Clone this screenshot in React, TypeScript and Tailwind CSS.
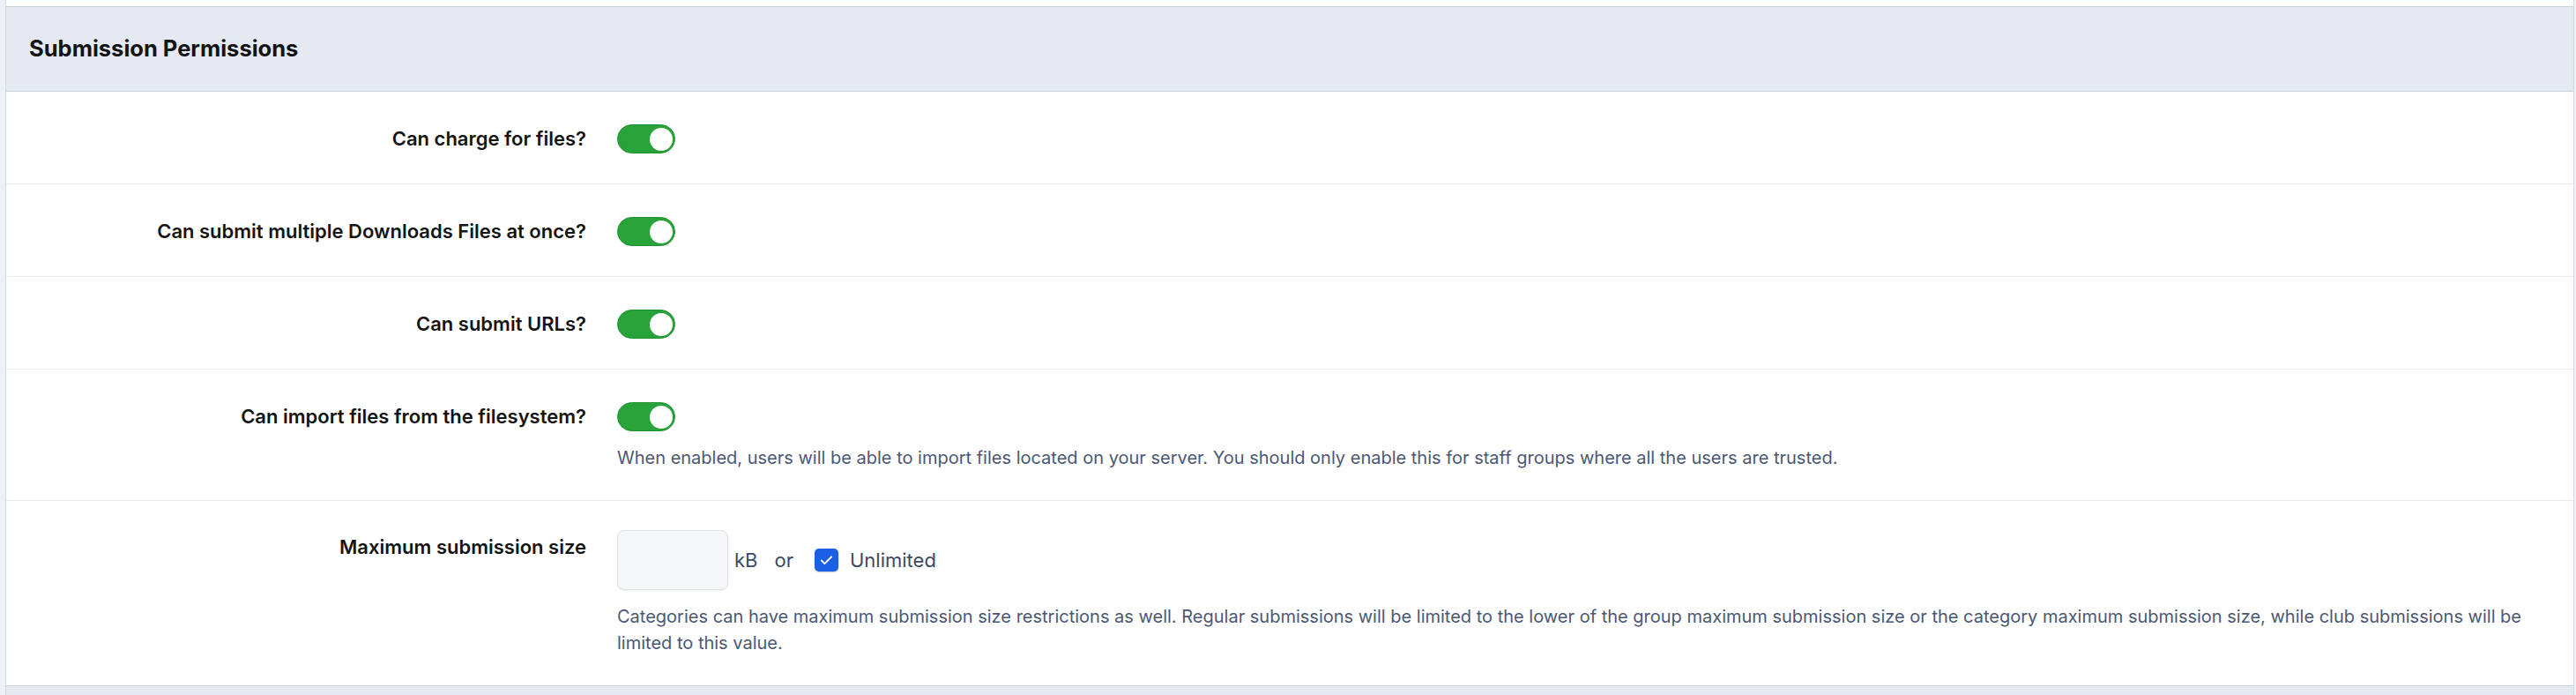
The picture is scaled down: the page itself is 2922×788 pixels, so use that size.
import { Check } from "lucide-react";

function Toggle() {
  return (
    <div className="flex h-[33px] w-[66px] items-center justify-end rounded-full border border-[#1f9130] bg-[#28a33a] pr-[2px]">
      <div className="h-[26px] w-[26px] rounded-full bg-white" />
    </div>
  );
}

function ToggleRow({ label, help }: { label: string; help?: string }) {
  return (
    <div className="flex border-b border-[#e9ebef]">
      <div className="w-[693px] shrink-0 pr-[35px] pt-[37px] text-right text-[22px] leading-[33px] font-semibold text-[#141414]">
        {label}
      </div>
      <div className={`flex-1 pr-[35px] pt-[37px] ${help ? "pb-[33px]" : "pb-[34px]"}`}>
        <Toggle />
        {help && <p className="mt-[15px] text-[20px] leading-[30px] text-[#4a5875]">{help}</p>}
      </div>
    </div>
  );
}

export default function App() {
  return (
    <div className="h-[788px] bg-[#edf0f5] pl-[6px] pr-[2px]" style={{ fontFamily: "Inter, 'Noto Sans', sans-serif" }}>
      <div className="h-full overflow-hidden border-x border-[#d3dae4] bg-white">
        <div className="h-[7px]" />
        <div className="flex h-[97px] items-center border-y border-[#c9d2de] bg-[#e5e9f1] pl-[26px]">
          <h2 className="text-[25.5px] font-bold text-[#141414]">Submission Permissions</h2>
        </div>

        <ToggleRow label="Can charge for files?" />
        <ToggleRow label="Can submit multiple Downloads Files at once?" />
        <ToggleRow label="Can submit URLs?" />
        <ToggleRow
          label="Can import files from the filesystem?"
          help="When enabled, users will be able to import files located on your server. You should only enable this for staff groups where all the users are trusted."
        />

        <div className="flex border-b border-[#c5cfdc]">
          <div className="w-[693px] shrink-0 pr-[35px] pt-[37px] text-right text-[22px] leading-[30px] font-semibold text-[#141414]">
            Maximum submission size
          </div>
          <div className="flex-1 pr-[35px] pt-[33px] pb-[33px]">
            <div className="flex items-center text-[22px] text-[#3d4a61]">
              <input
                type="text"
                className="h-[68px] w-[126px] rounded-[8px] border border-[#dde1e8] bg-[#f5f6f8] shadow-[0_1px_2px_rgba(0,0,0,0.06)] outline-none"
              />
              <span className="ml-[7px]">kB</span>
              <span className="ml-[19px]">or</span>
              <label className="ml-[24px] flex items-center">
                <span className="flex h-[26px] w-[27px] items-center justify-center rounded-[5px] bg-[#1b5fe4] shadow-[0_1px_2px_rgba(0,0,0,0.2)]">
                  <Check size={17} strokeWidth={2.5} color="white" />
                </span>
                <span className="ml-[13px]">Unlimited</span>
              </label>
            </div>
            <p className="mt-[15px] text-[20px] leading-[30px] text-[#4a5875]">
              Categories can have maximum submission size restrictions as well. Regular submissions will be limited to the lower of the group maximum submission size or the category maximum submission size, while club submissions will be limited to this value.
            </p>
          </div>
        </div>
        <div className="h-[20px] bg-[#e5e9f1]" />
      </div>
    </div>
  );
}
